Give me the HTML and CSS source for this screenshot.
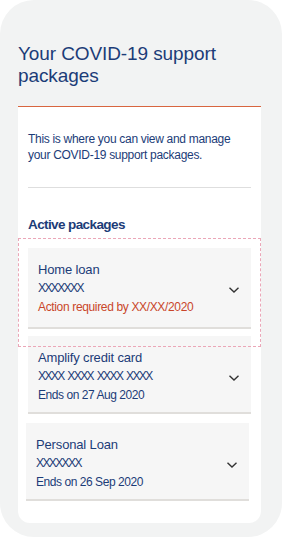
FILE: index.html
```html
<!DOCTYPE html>
<html lang="en">

<head>
    <meta charset="UTF-8">
    <meta name="viewport" content="width=device-width, initial-scale=1.0">
    <title>COVID-19 support packages</title>
    <link rel="stylesheet" href="styles.css">
</head>

<body>
    <div class="frame">
        <h1 class="title">Your COVID-19 support packages</h1>

        <div class="panel">
            <p class="intro">This is where you can view and manage your COVID-19 support packages.</p>
            <div class="divider"></div>

            <h2 class="subtitle">Active packages</h2>

            <ul class="packages">
                <li class="package is-selected">
                    <div class="info">
                        <div class="name">Home loan</div>
                        <div class="number">XXXXXXX</div>
                        <div class="meta warn">Action required by XX/XX/2020</div>
                    </div>
                    <svg class="chevron" width="12" height="8" viewBox="0 0 12 8">
                        <path d="M1.5 1.8 L6 6 L10.5 1.8" fill="none" stroke="#333" stroke-width="1.4" />
                    </svg>
                    <span class="outline"></span>
                </li>
                <li class="package">
                    <div class="info">
                        <div class="name">Amplify credit card</div>
                        <div class="number">XXXX XXXX XXXX XXXX</div>
                        <div class="meta">Ends on 27 Aug 2020</div>
                    </div>
                    <svg class="chevron" width="12" height="8" viewBox="0 0 12 8">
                        <path d="M1.5 1.8 L6 6 L10.5 1.8" fill="none" stroke="#333" stroke-width="1.4" />
                    </svg>
                </li>
                <li class="package shifted">
                    <div class="info">
                        <div class="name">Personal Loan</div>
                        <div class="number">XXXXXXX</div>
                        <div class="meta">Ends on 26 Sep 2020</div>
                    </div>
                    <svg class="chevron" width="12" height="8" viewBox="0 0 12 8">
                        <path d="M1.5 1.8 L6 6 L10.5 1.8" fill="none" stroke="#333" stroke-width="1.4" />
                    </svg>
                </li>
            </ul>
        </div>
    </div>
</body>

</html>
```
FILE: styles.css
```css
* {
    margin: 0;
    padding: 0;
    box-sizing: border-box;
}

body {
    background-color: #fff;
    font-family: "Liberation Sans", Arial, sans-serif;
    color: #1c3c78;
}

li {
    list-style-type: none;
}

.frame {
    width: 282px;
    height: 537px;
    padding: 43px 21px 0 18px;
    background-color: #f2f3f3;
    border-radius: 34px;
}

.title {
    font-size: 19px;
    font-weight: normal;
    line-height: 22px;
    letter-spacing: -0.1px;
    margin-bottom: 19px;
}

.panel {
    background-color: #fff;
    border-top: 1px solid #d8653f;
    border-radius: 0 0 12px 12px;
    padding: 24px 10px 22px;
}

.intro {
    font-size: 12px;
    line-height: 16px;
    letter-spacing: -0.3px;
}

.divider {
    height: 1px;
    margin-top: 24px;
    background-color: #dedede;
}

.subtitle {
    font-size: 13.5px;
    font-weight: bold;
    line-height: 18px;
    letter-spacing: -0.6px;
    margin: 28px 0 14px;
}

.packages {
    display: flex;
    flex-direction: column;
    gap: 7px;
}

.package {
    position: relative;
    display: flex;
    align-items: center;
    justify-content: space-between;
    padding: 12px 11px 7px 10px;
    background-color: #f6f6f6;
    border-bottom: 2px solid #e0dedb;
}

.package.is-selected {
    padding-bottom: 10px;
}

.package.shifted {
    margin: 2px 2px 0 -2px;
}

.package .info {
    line-height: 19px;
}

.package .name {
    font-size: 13px;
    letter-spacing: -0.15px;
}

.package .number {
    font-size: 12px;
    letter-spacing: -1.6px;
    word-spacing: 2px;
}

.package .meta {
    font-size: 12px;
    letter-spacing: -0.45px;
}

.package .warn {
    color: #c9462a;
    letter-spacing: -0.35px;
}

.package .chevron {
    flex-shrink: 0;
    margin-top: 2px;
}

.package .outline {
    position: absolute;
    top: -10px;
    left: -10px;
    right: -10px;
    bottom: -20px;
    border: 1px dashed #eba7b8;
    pointer-events: none;
    z-index: 1;
}
```
